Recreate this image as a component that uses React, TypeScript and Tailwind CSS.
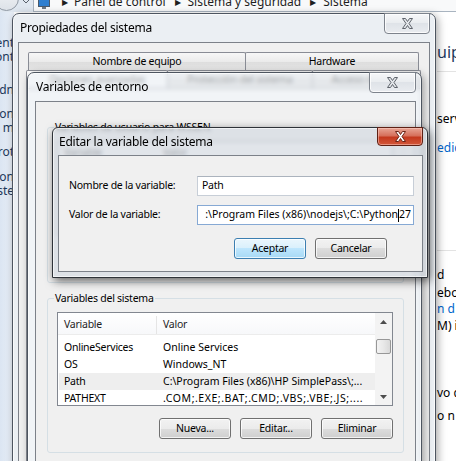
import React from "react";

const FONT = "font-['Noto_Sans',sans-serif]";
const BODY = "text-[10.5px] tracking-[-0.25px]";
const TITLE = "text-[12px] tracking-[-0.25px]";

function XGlyph({ active }: { active?: boolean }) {
  return (
    <svg width="13" height="11" viewBox="0 0 13 11">
      <path
        d="M1.5 0.5h3l2 3 2-3h3l-3.5 5 3.5 5h-3l-2-3-2 3h-3l3.5-5z"
        fill={active ? "#ffffff" : "#e4e7eb"}
        stroke={active ? "#6b2417" : "#5f646c"}
        strokeWidth="1"
        strokeLinejoin="round"
      />
    </svg>
  );
}

function CloseBtn({ active, w }: { active?: boolean; w: string }) {
  return (
    <div
      className={`${w} -mt-px flex items-center justify-center rounded-b-[4px] border ${
        active
          ? "h-[19px] border-[#5e2014] bg-[linear-gradient(#e8a595,#d6705b_45%,#c4391e_55%,#d2573a)] shadow-[inset_0_0_0_1px_rgba(255,210,200,0.5)]"
          : "h-[21px] border-[#7d838c] bg-[linear-gradient(#f6f7f9,#e9ecef_50%,#dfe3e8_50%,#e9ecf0)] shadow-[inset_0_0_0_1px_rgba(255,255,255,0.8)]"
      }`}
    >
      <XGlyph active={active} />
    </div>
  );
}

function Btn({ children, def }: { children: React.ReactNode; def?: boolean }) {
  return (
    <div
      className={`flex h-[21px] w-[72px] items-center justify-center rounded-[3px] border text-black shadow-[inset_0_0_0_1px_rgba(255,255,255,0.75)] ${BODY} ${
        def
          ? "border-[#3c7fb1] bg-[linear-gradient(#eaf6fd,#d9f0fc_50%,#bee6fd_50%,#a7d9f5)]"
          : "border-[#707070] bg-[linear-gradient(#f2f2f2,#ebebeb_50%,#dddddd_50%,#cfcfcf)]"
      }`}
    >
      {children}
    </div>
  );
}

function Tab({ w, children, sel }: { w: string; children: React.ReactNode; sel?: boolean }) {
  return (
    <div
      className={`${w} -mr-px flex items-center justify-center rounded-t-[2px] border border-b-0 border-[#898c95] pt-[1px] ${
        sel ? "bg-white" : "bg-[linear-gradient(#f7f7f7,#ebebeb_50%,#dddddd_50%,#e5e5e5)]"
      }`}
    >
      {children}
    </div>
  );
}

const rows = [
  ["OnlineServices", "Online Services", "tracking-normal"],
  ["OS", "Windows_NT", "tracking-normal"],
  ["Path", "C:\\Program Files (x86)\\HP SimplePass\\;...", "tracking-normal"],
  ["PATHEXT", ".COM;.EXE;.BAT;.CMD;.VBS;.VBE;.JS;....", "tracking-[0.55px]"],
];

function Tri({ up }: { up?: boolean }) {
  return (
    <svg width="7" height="4" viewBox="0 0 7 4">
      <path d={up ? "M0 4L3.5 0L7 4z" : "M0 0L3.5 4L7 0z"} fill="#4d4d4d" />
    </svg>
  );
}

function Scrollbar() {
  return (
    <div className="flex w-[17px] flex-col bg-[#f3f3f3]">
      <div className="flex h-[17px] items-center justify-center">
        <Tri up />
      </div>
      <div className="mx-[1px] mt-[9px] h-[15px] rounded-[2px] border border-[#979797] bg-[linear-gradient(90deg,#f3f3f3,#e8e8e8_50%,#d9d9d9)]" />
      <div className="flex-1" />
      <div className="flex h-[17px] items-center justify-center">
        <Tri />
      </div>
    </div>
  );
}

function SystemVars() {
  return (
    <fieldset className="mt-[7px] h-[163px] rounded-[3px] border border-[#d5dfe5] pl-[9px] pr-[10px]">
      <legend className="-ml-[3px] px-[1px] leading-[16px]">Variables del sistema</legend>
      <div className="mt-[6px] flex h-[94px] overflow-hidden border border-[#828790] bg-white">
        <div className="flex flex-1 flex-col">
          <div className="flex h-[22px] shrink-0 items-center border-b border-[#ececec] bg-[linear-gradient(#ffffff,#f7f8fa)] pt-[3px] text-[#1e1e1e]">
            <div className="flex h-full w-[99px] items-center border-r border-[#e5e5e5] pl-[6px]">Variable</div>
            <div className="pl-[6px]">Valor</div>
          </div>
          <div className="mt-[4px] flex flex-col pl-[1px]">
            {rows.map(([a, b, t]) => (
              <div key={a} className={`flex h-[17px] shrink-0 items-center ${a === "Path" ? "bg-[#eeeeee]" : ""}`}>
                <div className="w-[98px] pl-[5px]">{a}</div>
                <div className={`whitespace-nowrap pl-[6px] ${t}`}>{b}</div>
              </div>
            ))}
          </div>
        </div>
        <Scrollbar />
      </div>
      <div className="mt-[12px] flex justify-end gap-[9px]">
        <Btn>Nueva...</Btn>
        <Btn>Editar...</Btn>
        <Btn>Eliminar</Btn>
      </div>
    </fieldset>
  );
}

function UserVars() {
  return (
    <fieldset className="h-[164px] rounded-[3px] border border-[#d5dfe5] pl-[9px] pr-[10px]">
      <legend className="-ml-[3px] px-[1px] leading-[16px]">Variables de usuario para WSSEN</legend>
      <div className="mt-[6px] flex h-[94px] border border-[#828790] bg-white">
        <div className="flex h-[22px] flex-1 items-center">
          <div className="w-[99px] pl-[6px]">Variable</div>
          <div className="pl-[6px]">Valor</div>
        </div>
      </div>
    </fieldset>
  );
}

export default function App() {
  return (
    <div className={`relative h-[461px] w-[456px] overflow-hidden bg-white text-black ${FONT} ${BODY}`}>
      {/* explorer address bar */}
      <div className="absolute inset-x-0 top-0 flex h-[12px] overflow-hidden bg-[#dfe7f0] tracking-normal">
        <div className="relative w-[33px]">
          <div className="absolute -left-[6px] -top-[14px] h-[25px] w-[25px] rounded-full border border-[#8f98a3] bg-[linear-gradient(#f3f5f7,#dde2e8)]" />
          <div className="absolute left-[23px] top-[0px]">
            <svg width="6" height="4" viewBox="0 0 6 4">
              <path d="M0 0L3 3L6 0" fill="none" stroke="#59616b" strokeWidth="1" />
            </svg>
          </div>
        </div>
        <div className="flex flex-1 border-b border-l border-[#a9b4c0] bg-[#f8f9fa]">
          <div className="-mt-[8px] flex h-[20px] items-center text-[12px] text-[#1e1e1e]">
            <svg width="12" height="10" viewBox="0 0 12 10" className="ml-[4px] mt-[4px]">
              <rect x="0.5" y="0.5" width="11" height="7" fill="#2f7fd0" stroke="#4a5a6c" />
              <rect x="4" y="8" width="4" height="2" fill="#6d7884" />
            </svg>
            <span className="ml-[12px] text-[8px]">▶</span>
            <span className="ml-[6px]">Panel de control</span>
            <span className="ml-[9px] text-[8px]">▶</span>
            <span className="ml-[7px]">Sistema y seguridad</span>
            <span className="ml-[9px] text-[8px]">▶</span>
            <span className="ml-[7px]">Sistema</span>
          </div>
        </div>
      </div>

      {/* explorer left pane */}
      <div className="absolute bottom-0 left-0 top-[12px] flex w-[14px] flex-col bg-[linear-gradient(90deg,#dbe5f2,#eaf0f8)] text-[12px] leading-[14px] tracking-normal text-[#1e395b]">
        {[
          ["ent", "mt-[24px]"],
          ["ont", ""],
          ["dn", "mt-[19px]"],
          ["on", "mt-[10px]"],
          ["m", ""],
          ["rot", "mt-[10px]"],
          ["on", "mt-[11px]"],
          ["ste", ""],
        ].map(([t, m], i) => (
          <div key={i} className={`flex justify-end overflow-hidden whitespace-nowrap ${m}`}>
            {t}
          </div>
        ))}
      </div>

      {/* explorer right pane */}
      <div className="absolute bottom-0 left-[434px] right-0 top-[12px] flex flex-col overflow-hidden whitespace-nowrap bg-white pl-[3px] text-[12px] leading-[14px] tracking-normal">
        <div className="mt-[29px] text-[16px] leading-[22px] text-[#1e395b]">uip</div>
        <div className="mt-[8px] border-t border-[#e3e3e3]" />
        <div className="mt-[40px]">serv</div>
        <div className="mt-[15px] text-[#0066cc]">edic</div>
        <div className="mt-[95px] border-t border-[#e3e3e3]" />
        <div className="mt-[17px]">d</div>
        <div className="mt-[4px]">ebo</div>
        <div className="mt-[2px] text-[#0066cc]">n d</div>
        <div className="mt-[3px]">M) i3</div>
        <div className="mt-[53px]">vo d</div>
        <div className="mt-[9px]">o n</div>
      </div>

      {/* Propiedades del sistema */}
      <div className="absolute left-[12px] top-[13px] flex h-[470px] w-[424px] flex-col rounded-t-[7px] border border-[#4d5560] bg-[rgba(232,236,241,0.85)] px-[5px] shadow-[inset_0_0_0_1px_rgba(255,255,255,0.7),2px_2px_8px_rgba(0,0,0,0.35)] backdrop-blur-[2px]">
        <div className="flex h-[28px] shrink-0 items-start justify-between">
          <span className={`self-center pl-[2px] ${TITLE}`}>Propiedades del sistema</span>
          <CloseBtn w="w-[46px]" />
        </div>
        <div className="flex flex-1 flex-col border border-[#7c8189] bg-[#f0f0f0] px-[7px] pt-[9px]">
          <div className="ml-[2px] flex h-[18px]">
            <Tab w="w-[218px]">Nombre de equipo</Tab>
            <Tab w="w-[174px]">Hardware</Tab>
          </div>
          <div className="flex h-[18px] text-[#333]">
            <Tab w="w-[142px]" sel>Opciones avanzadas</Tab>
            <Tab w="w-[146px]">Protección del sistema</Tab>
            <Tab w="w-[109px]">Acceso remoto</Tab>
          </div>
          <div className="flex-1 border border-[#898c95] bg-white" />
        </div>
      </div>

      {/* Variables de entorno */}
      <div className="absolute left-[27px] top-[72px] flex h-[420px] w-[395px] flex-col rounded-t-[7px] border border-[#4d5560] bg-[rgba(232,236,241,0.6)] pl-[7px] pr-[5px] shadow-[inset_0_0_0_1px_rgba(255,255,255,0.7),2px_2px_8px_rgba(0,0,0,0.35)] backdrop-blur-[2px]">
        <div className="flex h-[28px] shrink-0 items-start justify-between">
          <span className={`self-center pl-[1px] ${TITLE}`}>Variables de entorno</span>
          <CloseBtn w="w-[47px]" />
        </div>
        <div className="flex flex-1 flex-col border border-[#7c8189] bg-[#f0f0f0] px-[11px] pt-[17px]">
          <UserVars />
          <SystemVars />
        </div>
      </div>

      {/* Editar la variable del sistema */}
      <div className="absolute left-[52px] top-[127px] flex h-[151px] w-[376px] flex-col rounded-t-[6px] border border-[#2e3238] bg-[rgba(214,219,226,0.72)] pb-[5px] pl-[5px] pr-[4px] shadow-[inset_0_0_0_1px_rgba(255,255,255,0.6),2px_3px_10px_rgba(0,0,0,0.6)] backdrop-blur-[2px]">
        <div className="flex h-[27px] shrink-0 items-start justify-between">
          <span className={`self-center pl-[1px] ${TITLE}`}>Editar la variable del sistema</span>
          <CloseBtn active w="w-[46px]" />
        </div>
        <div className="flex flex-1 flex-col border border-[#7c8189] bg-[#f0f0f0] pl-[10px] pr-[8px] pt-[20px]">
          <div className="flex h-[20px] items-center">
            <div className="w-[128px]">Nombre de la variable:</div>
            <div className="flex h-[20px] flex-1 items-center border border-[#c7ced7] border-t-[#abb3bd] bg-white pl-[4px]">Path</div>
          </div>
          <div className="mt-[9px] flex h-[20px] items-center">
            <div className="w-[128px]">Valor de la variable:</div>
            <div className="flex h-[20px] flex-1 items-center justify-end overflow-hidden whitespace-nowrap border border-[#86a9d4] bg-white pr-[2px] tracking-normal">
              <span>:\Program Files (x86)\nodejs\;C:\Python</span>
              <span className="inline-block h-[13px] w-px bg-black" />
              <span>27</span>
            </div>
          </div>
          <div className="mr-[27px] mt-[13px] flex justify-end gap-[9px]">
            <Btn def>Aceptar</Btn>
            <Btn>Cancelar</Btn>
          </div>
        </div>
      </div>
    </div>
  );
}
